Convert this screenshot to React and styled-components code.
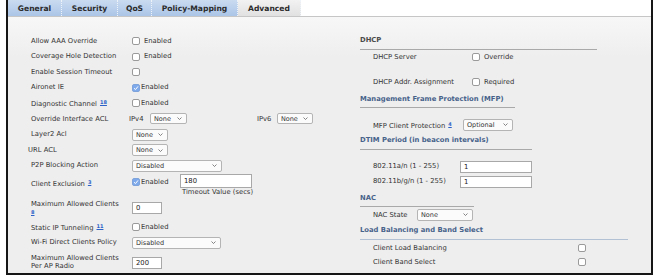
import React from 'react'
import styled, { createGlobalStyle } from 'styled-components'

const Global = createGlobalStyle`
    body {
        margin: 0;
        background: #fff;
        font-family: "DejaVu Sans", "Noto Sans", sans-serif;
    }
`
const Frame = styled.div`
    margin-left: 6px;
    width: 647px;
    height: 275px;
    box-sizing: border-box;
    border: 2px solid #161616;
    border-top: none;
    background: #efefef;
    display: flex;
    flex-direction: column;
`
const TabBar = styled.div`
    height: 17px;
    box-sizing: border-box;
    background: #fff;
    border-bottom: 1px solid #c6c6c6;
    display: flex;
`
const Tab = styled.div`
    width: ${p => p.w}px;
    height: 16px;
    box-sizing: border-box;
    display: flex;
    align-items: center;
    justify-content: center;
    font-weight: bold;
    font-size: 7.6px;
    color: #2b2b2b;
    background: ${p => p.active ? 'linear-gradient(#f2f2f2, #e1e1e1)' : 'linear-gradient(#cadbf0, #abc5e7)'};
    border-right: 1px dotted #eef2f9;
`
const Content = styled.div`
    flex: 1;
    display: flex;
    background: linear-gradient(#f7f7f7, #eeeeee 40px);
`
const LeftCol = styled.div`
    width: 350px;
    box-sizing: border-box;
    padding: 16.2px 0 0 23px;
`
const RightCol = styled.div`
    flex: 1;
    padding: 18.5px 0 0 2px;
`
const Row = styled.div`
    display: flex;
    align-items: ${p => p.top ? 'flex-start' : 'center'};
    height: ${p => p.h || 15.6}px;
    margin-top: ${p => p.mt || 0}px;
    padding-left: ${p => p.indent || 0}px;
`
const Label = styled.div`
    width: ${p => p.w}px;
    flex-shrink: 0;
    font-size: 6.8px;
    line-height: 8.8px;
    color: #333;
    margin-left: ${p => p.shift || 0}px;
    margin-top: ${p => p.mt || 0}px;
`
const Text = styled.span`
    font-size: 6.8px;
    line-height: 8.8px;
    color: #333;
    margin-left: ${p => p.ml || 0}px;
    margin-right: ${p => p.mr || 0}px;
`
const Note = styled.span`
    font-size: 5px;
    font-weight: bold;
    color: #2d63c8;
    text-decoration: underline;
    vertical-align: 2px;
    margin-left: 3px;
`
const Box = styled.span`
    width: 8px;
    height: 8px;
    box-sizing: border-box;
    flex-shrink: 0;
    border: 1px solid ${p => p.checked ? '#7fa4dc' : '#9a9a9a'};
    border-radius: 2px;
    background: ${p => p.checked ? '#7ea9ea' : '#fff'};
    display: inline-flex;
    align-items: center;
    justify-content: center;
`
const CheckGroup = styled.div`
    display: flex;
    align-items: center;
    width: ${p => p.w ? `${p.w}px` : 'auto'};
    margin-top: ${p => p.mt || 0}px;
`
const SelectBox = styled.div`
    width: ${p => p.w}px;
    height: ${p => p.h || 12}px;
    box-sizing: border-box;
    border: 1px solid #b4b4b4;
    border-radius: 2px;
    background: #fbfbfb;
    display: flex;
    align-items: center;
    justify-content: space-between;
    padding: 0 4px 0 3px;
    font-size: 6.5px;
    color: #333;
    margin-left: ${p => p.ml || 0}px;
`
const InputBox = styled.div`
    width: ${p => p.w}px;
    height: ${p => p.h || 13}px;
    box-sizing: border-box;
    border: 1px solid #a8a8a8;
    background: #fff;
    display: flex;
    align-items: center;
    padding-left: 3px;
    font-size: 6.8px;
    color: #222;
    margin-top: ${p => p.mt || 0}px;
`
const Stack = styled.div`
    display: flex;
    flex-direction: column;
`
const Heading = styled.div`
    width: ${p => p.w}px;
    height: ${p => p.h}px;
    margin-top: ${p => p.mt || 0}px;
    box-sizing: border-box;
    border-bottom: 1px solid ${p => p.line || '#a9a9a9'};
    font-weight: bold;
    font-size: 6.8px;
    line-height: 9px;
    color: ${p => p.color || '#47628a'};
`

const Check = ({ checked, text, tight, w, mt }) => (
    <CheckGroup w={w} mt={mt}>
        <Box checked={checked}>
            {checked && (
                <svg width="6" height="6" viewBox="0 0 6 6">
                    <polyline points="1,3.2 2.5,4.6 5,1.4" fill="none" stroke="#fff" strokeWidth="1" />
                </svg>
            )}
        </Box>
        {text && <Text ml={tight ? 1 : 4}>{text}</Text>}
    </CheckGroup>
)

const Select = ({ value, w, h, ml }) => (
    <SelectBox w={w} h={h} ml={ml}>
        <span>{value}</span>
        <svg width="5" height="3" viewBox="0 0 5 3">
            <polyline points="0.5,0.5 2.5,2.5 4.5,0.5" fill="none" stroke="#666" strokeWidth="0.8" />
        </svg>
    </SelectBox>
)

const tabs = [
    { name: 'General', w: 54 },
    { name: 'Security', w: 56 },
    { name: 'QoS', w: 34 },
    { name: 'Policy-Mapping', w: 86 },
    { name: 'Advanced', w: 63, active: true },
]

const App = () => {
    return (
        <>
            <Global />
            <Frame>
                <TabBar>
                    {tabs.map(t => (
                        <Tab key={t.name} w={t.w} active={t.active}>{t.name}</Tab>
                    ))}
                </TabBar>
                <Content>
                    <LeftCol>
                        <Row>
                            <Label w={101}>Allow AAA Override</Label>
                            <Check text="Enabled" />
                        </Row>
                        <Row>
                            <Label w={101}>Coverage Hole Detection</Label>
                            <Check text="Enabled" />
                        </Row>
                        <Row>
                            <Label w={101}>Enable Session Timeout</Label>
                            <Check />
                        </Row>
                        <Row>
                            <Label w={101}>Aironet IE</Label>
                            <Check checked text="Enabled" tight />
                        </Row>
                        <Row>
                            <Label w={101}>Diagnostic Channel<Note>18</Note></Label>
                            <Check text="Enabled" tight />
                        </Row>
                        <Row>
                            <Label w={98}>Override Interface ACL</Label>
                            <Text mr={6.5}>IPv4</Text>
                            <Select value="None" w={37} h={11} />
                            <Text ml={70} mr={5.5}>IPv6</Text>
                            <Select value="None" w={36} h={11} />
                        </Row>
                        <Row>
                            <Label w={101}>Layer2 Acl</Label>
                            <Select value="None" w={36} />
                        </Row>
                        <Row>
                            <Label w={104} shift={-3}>URL ACL</Label>
                            <Select value="None" w={36} />
                        </Row>
                        <Row>
                            <Label w={101}>P2P Blocking Action</Label>
                            <Select value="Disabled" w={90} />
                        </Row>
                        <Row h={26} top>
                            <Label w={101} mt={4}>Client Exclusion<Note>3</Note></Label>
                            <Check checked text="Enabled" tight w={48} mt={4.4} />
                            <Stack>
                                <InputBox w={72} h={14}>180</InputBox>
                                <Text ml={2}>Timeout Value (secs)</Text>
                            </Stack>
                        </Row>
                        <Row h={19.6} top>
                            <Label w={101}>
                                Maximum Allowed Clients<br />
                                <Note style={{ marginLeft: 0 }}>8</Note>
                            </Label>
                            <InputBox w={30} h={12} mt={2}>0</InputBox>
                        </Row>
                        <Row>
                            <Label w={101}>Static IP Tunneling<Note>11</Note></Label>
                            <Check text="Enabled" tight />
                        </Row>
                        <Row>
                            <Label w={101}>Wi-Fi Direct Clients Policy</Label>
                            <Select value="Disabled" w={89} />
                        </Row>
                        <Row h={20} top>
                            <Label w={101} mt={3.2}>Maximum Allowed Clients<br />Per AP Radio</Label>
                            <InputBox w={30} h={12} mt={6.3}>200</InputBox>
                        </Row>
                    </LeftCol>
                    <RightCol>
                        <Heading w={237} h={14.5} color="#4a4a4a">DHCP</Heading>
                        <Row h={14} indent={13}>
                            <Label w={99}>DHCP Server</Label>
                            <Check text="Override" />
                        </Row>
                        <Row h={14} mt={11} indent={13}>
                            <Label w={99}>DHCP Addr. Assignment</Label>
                            <Check text="Required" />
                        </Row>
                        <Heading w={155} h={13.2} mt={5.5}>Management Frame Protection (MFP)</Heading>
                        <Row h={14} mt={10.3} indent={13}>
                            <Label w={90}>MFP Client Protection<Note>4</Note></Label>
                            <Select value="Optional" w={50} h={12} />
                        </Row>
                        <Heading w={172} h={13.8} mt={4.2}>DTIM Period (in beacon intervals)</Heading>
                        <Row h={14} mt={9.7} indent={13}>
                            <Label w={87}>802.11a/n (1 - 255)</Label>
                            <InputBox w={72} h={12}>1</InputBox>
                        </Row>
                        <Row h={14} mt={1} indent={13}>
                            <Label w={87}>802.11b/g/n (1 - 255)</Label>
                            <InputBox w={72} h={12}>1</InputBox>
                        </Row>
                        <Heading w={114} h={13.2} mt={5.1}>NAC</Heading>
                        <Row h={14} mt={1} indent={13}>
                            <Label w={44}>NAC State</Label>
                            <Select value="None" w={56} h={12} />
                        </Row>
                        <Heading w={268} h={13.5} mt={4.5} line="#b3c1d4">Load Balancing and Band Select</Heading>
                        <Row h={14} mt={1.3} indent={13}>
                            <Label w={205}>Client Load Balancing</Label>
                            <Check />
                        </Row>
                        <Row h={14} indent={13}>
                            <Label w={205}>Client Band Select</Label>
                            <Check />
                        </Row>
                    </RightCol>
                </Content>
            </Frame>
        </>
    )
}

export default App
